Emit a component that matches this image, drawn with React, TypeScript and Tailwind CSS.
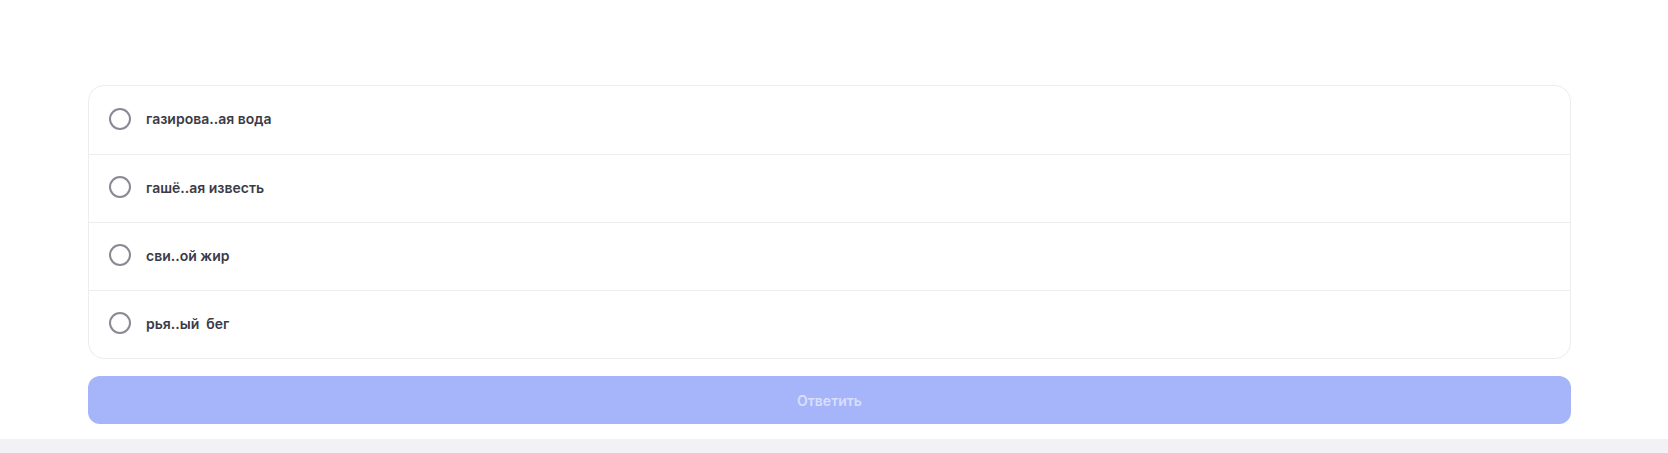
import { useState } from "react";

const options = ["газирова..ая вода", "гашё..ая известь", "сви..ой жир", "рья..ый  бег"];

export default function App() {
  const [picked, setPicked] = useState<number | null>(null);

  return (
    <div className="w-full min-h-[453px] bg-white flex flex-col font-['Inter','Noto_Sans',sans-serif]">
      <div className="pt-[85px] pl-[88px] pr-[97px] flex flex-col">
        {/* answer options */}
        <div className="border border-[#ececf1] rounded-2xl bg-white flex flex-col">
          {options.map((o, i) => (
            <label
              key={o}
              onClick={() => setPicked(i)}
              className={
                "h-[68px] pb-[3px] flex items-center gap-[15px] pl-[20px] cursor-pointer " +
                (i > 0 ? "border-t border-[#ececf1]" : "")
              }
            >
              <span className="w-[22px] h-[22px] rounded-full border-2 border-[#8a8995] flex items-center justify-center">
                {picked === i && <span className="w-[10px] h-[10px] rounded-full bg-[#6e7ff3]" />}
              </span>
              <span className="text-[14px] font-semibold text-[#3b3b47] whitespace-pre">{o}</span>
            </label>
          ))}
        </div>

        <button className="mt-[17px] h-[48px] rounded-xl bg-[#a6b5f9] text-[14px] font-semibold text-[#d8dffd]">
          Ответить
        </button>
      </div>
      <div className="mt-[15px] flex-1 bg-[#f2f2f6] min-h-[14px]" />
    </div>
  );
}
